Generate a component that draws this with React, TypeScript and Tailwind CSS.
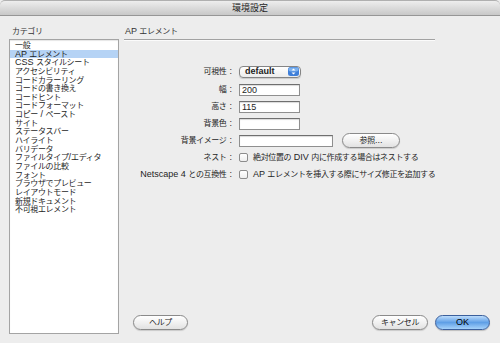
import React from 'react'

const CJK = /([\u3000-\u30ff\u3400-\u9fff\uff00-\uffef]+)/

// CJK runs render a bit smaller than latin, like the Hiragino/Lucida mix in the shot
function T({ s }: { s: string }) {
  return (
    <>
      {s.split(CJK).map((p, i) =>
        CJK.test(p) ? (
          <span key={i} className="text-[8px] tracking-[-0.35px]">
            {p}
          </span>
        ) : (
          p
        )
      )}
    </>
  )
}

const categories = [
  '一般',
  'AP エレメント',
  'CSS スタイルシート',
  'アクセシビリティ',
  'コードカラーリング',
  'コードの書き換え',
  'コードヒント',
  'コードフォーマット',
  'コピー / ペースト',
  'サイト',
  'ステータスバー',
  'ハイライト',
  'バリデータ',
  'ファイルタイプ/エディタ',
  'ファイルの比較',
  'フォント',
  'ブラウザでプレビュー',
  'レイアウトモード',
  '新規ドキュメント',
  '不可視エレメント',
]

function Label({ s }: { s: string }) {
  return (
    <div className="w-[109px] shrink-0 text-right pr-[1px] whitespace-nowrap">
      <T s={s} />
      <span className="ml-[3px]">:</span>
    </div>
  )
}

function Field({ value, w }: { value?: string; w: string }) {
  return (
    <div
      className={`${w} h-[12px] ml-[6px] bg-white border border-[#8f8f8f] border-t-[#6f6f6f] shadow-[inset_0_1px_1px_rgba(0,0,0,0.15)] pl-[2px] leading-[10px] text-[9px]`}
    >
      {value}
    </div>
  )
}

function Check({ s }: { s: string }) {
  return (
    <div className="flex items-center ml-[6px]">
      <div className="w-[9px] h-[9px] rounded-[2px] bg-gradient-to-b from-white to-[#eeeeee] border border-[#8c8c8c]" />
      <div className="ml-[5px] whitespace-nowrap">
        <T s={s} />
      </div>
    </div>
  )
}

function PillButton({ children, w }: { children: React.ReactNode; w: string }) {
  return (
    <div
      className={`${w} h-[15px] rounded-full border border-[#8a8a8a] bg-gradient-to-b from-white via-[#f1f1f1] to-[#e2e2e2] shadow-[0_1px_1px_rgba(0,0,0,0.15)] flex items-center justify-center leading-none`}
    >
      {children}
    </div>
  )
}

export default function App() {
  return (
    <div className="w-[500px] h-[343px] bg-[#ededed] flex flex-col overflow-hidden font-['Liberation_Sans','Noto_Sans_CJK_JP',sans-serif] text-[9px] text-[#1e1e1e]">
      {/* title bar */}
      <div className="h-[16px] shrink-0 rounded-t-[5px] border-t border-[#b0b0b0] border-b border-b-[#969696] bg-gradient-to-b from-[#eeeeee] to-[#c8c8c8] flex items-center justify-center">
        <span className="text-[9px] text-[#262626] leading-none">環境設定</span>
      </div>

      <div className="flex flex-1 min-h-0">
        {/* category list */}
        <div className="w-[119px] shrink-0 pl-[9px] pt-[10px] pb-[9px] flex flex-col">
          <div className="h-[10px] leading-[10px] pl-[3px] text-[#333]">
            <T s="カテゴリ" />
          </div>
          <div className="mt-[3px] flex-1 bg-white border border-[#a4a4a4] shadow-[inset_0_1px_1px_rgba(0,0,0,0.1)] pt-[1px]">
            {categories.map((c) => (
              <div
                key={c}
                className={`pl-[5px] h-[8.65px] leading-[8.65px] whitespace-nowrap ${
                  c === 'AP エレメント' ? 'bg-[#b5d3f5]' : ''
                }`}
              >
                <T s={c} />
              </div>
            ))}
          </div>
        </div>

        {/* settings panel */}
        <div className="flex-1 flex flex-col pl-[5px] pt-[10px] pr-[10px] pb-[13px]">
          <div className="h-[10px] leading-[10px] pl-[1px] text-[#333]">
            <T s="AP エレメント" />
          </div>
          <div className="mt-[3px] w-[311px] border-t border-[#a2a2a2] border-b border-b-[#fbfbfb]" />

          <div className="mt-[21px] flex flex-col">
            <div className="h-[19px] flex items-center">
              <Label s="可視性" />
              <div className="ml-[6px] w-[62px] h-[12px] rounded-[4px] bg-gradient-to-b from-white to-[#ececec] border border-[#858585] shadow-[0_1px_1px_rgba(0,0,0,0.15)] flex items-center justify-between pl-[5px] pr-[1px]">
                <span className="text-[9px] font-bold leading-none text-[#222]">default</span>
                <svg width="11" height="9" viewBox="0 0 11 9">
                  <rect x="0" y="0" width="11" height="9" rx="2.5" fill="#3f7fd9" />
                  <rect x="0.5" y="0.5" width="10" height="4" rx="2" fill="#7cb1ee" />
                  <path d="M3.5 3.6 L5.5 1.4 L7.5 3.6 Z" fill="#fff" />
                  <path d="M3.5 5.4 L5.5 7.6 L7.5 5.4 Z" fill="#fff" />
                </svg>
              </div>
            </div>
            <div className="h-[17px] flex items-center">
              <Label s="幅" />
              <Field value="200" w="w-[61px]" />
            </div>
            <div className="h-[17px] flex items-center">
              <Label s="高さ" />
              <Field value="115" w="w-[61px]" />
            </div>
            <div className="h-[17px] flex items-center">
              <Label s="背景色" />
              <Field w="w-[61px]" />
            </div>
            <div className="h-[17px] flex items-center">
              <Label s="背景イメージ" />
              <Field w="w-[94px]" />
              <div className="ml-[9px]">
                <PillButton w="w-[58px]">
                  <T s="参照..." />
                </PillButton>
              </div>
            </div>
            <div className="h-[17px] flex items-center">
              <Label s="ネスト" />
              <Check s="絶対位置の DIV 内に作成する場合はネストする" />
            </div>
            <div className="h-[17px] flex items-center">
              <Label s="Netscape 4 との互換性" />
              <Check s="AP エレメントを挿入する際にサイズ修正を追加する" />
            </div>
          </div>

          <div className="mt-auto flex items-center justify-between pl-[9px]">
            <PillButton w="w-[55px]">
              <T s="ヘルプ" />
            </PillButton>
            <div className="flex items-center gap-[7px]">
              <PillButton w="w-[56px]">
                <T s="キャンセル" />
              </PillButton>
              <div className="w-[55px] h-[15px] rounded-full border border-[#3b5f9c] bg-gradient-to-b from-[#bcdcfb] via-[#5f9fe6] to-[#a6d2fa] shadow-[0_1px_1px_rgba(0,0,0,0.2)] flex items-center justify-center leading-none text-black">
                OK
              </div>
            </div>
          </div>
        </div>
      </div>
    </div>
  )
}
